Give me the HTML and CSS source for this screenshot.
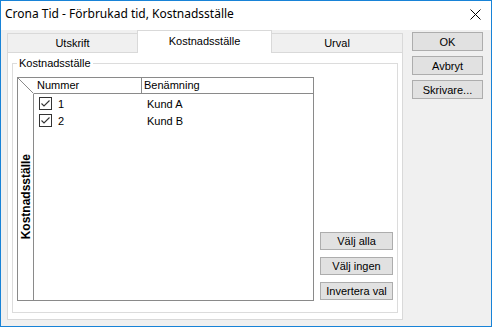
FILE: index.html
```html
<!DOCTYPE html>
<html lang="sv">
<head>
<meta charset="utf-8">
<title>Crona Tid - Förbrukad tid, Kostnadsställe</title>
<link rel="stylesheet" href="styles.css">
</head>
<body>
<div class="window">
  <div class="titlebar">
    <span class="title">Crona Tid - Förbrukad tid, Kostnadsställe</span>
    <svg class="close" width="11" height="11" viewBox="0 0 11 11"><path d="M0.5 0.5 L10.5 10.5 M10.5 0.5 L0.5 10.5" stroke="#000" stroke-width="1" fill="none"/></svg>
  </div>
  <div class="main">
    <div class="tabs-area">
      <div class="tabstrip">
        <div class="tab tab-first">Utskrift</div>
        <div class="tab tab-active">Kostnadsställe</div>
        <div class="tab tab-last">Urval</div>
      </div>
      <div class="panel">
        <fieldset class="group">
          <legend>Kostnadsställe</legend>
          <div class="group-body">
            <div class="grid">
              <div class="corner"><svg width="16" height="16" viewBox="0 0 16 16"><path d="M-1 -1 L15.5 15.5" stroke="#8a8a8a" stroke-width="1" fill="none"/></svg></div>
              <div class="header">
                <div class="hcell h-num">Nummer</div>
                <div class="hcell h-name">Benämning</div>
              </div>
              <div class="rowhead"><span class="vtext">Kostnadsställe</span></div>
              <div class="rows">
                <div class="row">
                  <div class="c-num"><svg class="chk" width="13" height="13" viewBox="0 0 13 13"><rect x="0.5" y="0.5" width="12" height="12" fill="#fff" stroke="#333"/><path d="M2.5 6.5 L5 9 L10.5 3.5" stroke="#333" stroke-width="1.1" fill="none"/></svg><span>1</span></div>
                  <div class="c-name">Kund A</div>
                </div>
                <div class="row">
                  <div class="c-num"><svg class="chk" width="13" height="13" viewBox="0 0 13 13"><rect x="0.5" y="0.5" width="12" height="12" fill="#fff" stroke="#333"/><path d="M2.5 6.5 L5 9 L10.5 3.5" stroke="#333" stroke-width="1.1" fill="none"/></svg><span>2</span></div>
                  <div class="c-name">Kund B</div>
                </div>
              </div>
            </div>
            <div class="side">
              <div class="btn">Välj alla</div>
              <div class="btn">Välj ingen</div>
              <div class="btn">Invertera val</div>
            </div>
          </div>
        </fieldset>
      </div>
    </div>
    <div class="buttons">
      <div class="btn btn-main">OK</div>
      <div class="btn btn-main">Avbryt</div>
      <div class="btn btn-main">Skrivare...</div>
    </div>
  </div>
</div>
</body>
</html>
```

FILE: styles.css
```css
* { box-sizing: border-box; }
html, body { margin: 0; padding: 0; }
body {
  width: 492px;
  height: 327px;
  overflow: hidden;
  font-family: "Liberation Sans", Arial, sans-serif;
  font-size: 11px;
  color: #000;
}
.window {
  width: 492px;
  height: 327px;
  border: 1px solid #1883d7;
  background: #f0f0f0;
  display: flex;
  flex-direction: column;
}
.titlebar {
  height: 29px;
  flex: none;
  background: #fff;
  display: flex;
  align-items: center;
  justify-content: space-between;
  padding: 0 10px 0 4px;
}
.title {
  font-family: "Noto Sans", sans-serif;
  font-size: 12px;
  line-height: 16px;
  margin-top: -3px;
}
.close { margin-top: -3px; }
.main {
  flex: 1;
  display: flex;
  gap: 9px;
  padding: 0 8px 6px 6px;
}
.tabs-area {
  width: 396px;
  display: flex;
  flex-direction: column;
}
.tabstrip {
  height: 22px;
  flex: none;
  display: flex;
  align-items: flex-end;
}
.tab {
  height: 19px;
  border-top: 1px solid #d9d9d9;
  background: #f0f0f0;
  display: flex;
  align-items: center;
  justify-content: center;
}
.tab-first { width: 130px; border-left: 1px solid #d9d9d9; }
.tab-last { width: 131px; border-right: 1px solid #d9d9d9; }
.tab-active {
  width: 135px;
  height: 23px;
  margin-bottom: -1px;
  padding-bottom: 2px;
  background: #fff;
  border: 1px solid #d9d9d9;
  border-bottom: none;
  position: relative;
  z-index: 1;
}
.panel {
  flex: 1;
  background: #fff;
  border: 1px solid #d9d9d9;
  padding: 4px 4px 6px 4px;
  display: flex;
}
.group {
  flex: 1;
  min-width: 0;
  margin: 0;
  border: 1px solid #dcdcdc;
  padding: 7px 4px 11px 4px;
  display: flex;
  flex-direction: column;
}
.group legend {
  padding: 0 2px;
  line-height: 13px;
  font-size: 11px;
}
.group-body {
  flex: 1;
  display: flex;
  gap: 6px;
}
.grid {
  width: 297px;
  border: 1px solid #8a8a8a;
  background: #fff;
  display: grid;
  grid-template-columns: 16px 1fr;
  grid-template-rows: 16px 1fr;
}
.corner svg { display: block; overflow: visible; }
.header {
  display: flex;
  border-bottom: 1px solid #8a8a8a;
}
.hcell { line-height: 15px; }
.h-num { width: 108px; padding-left: 3px; border-right: 1px solid #8a8a8a; }
.h-name { padding-left: 2px; }
.rowhead {
  border-right: 1px solid #8a8a8a;
  display: flex;
  align-items: center;
  justify-content: center;
}
.vtext {
  writing-mode: vertical-rl;
  transform: rotate(180deg);
  font-weight: bold;
  font-size: 12px;
}
.rows { padding-top: 1px; }
.row {
  height: 17px;
  display: flex;
  align-items: center;
}
.c-num {
  width: 108px;
  display: flex;
  align-items: center;
  gap: 6px;
  padding-left: 5px;
}
.chk { display: block; }
.c-name { padding-left: 5px; }
.side {
  width: 73px;
  display: flex;
  flex-direction: column;
  justify-content: flex-end;
  gap: 7px;
  padding-bottom: 1px;
}
.btn {
  height: 18px;
  background: #e1e1e1;
  border: 1px solid #adadad;
  display: flex;
  align-items: center;
  justify-content: center;
}
.buttons {
  width: 71px;
  display: flex;
  flex-direction: column;
  gap: 5px;
  padding-top: 2px;
}
.btn-main { height: 19px; }
```
